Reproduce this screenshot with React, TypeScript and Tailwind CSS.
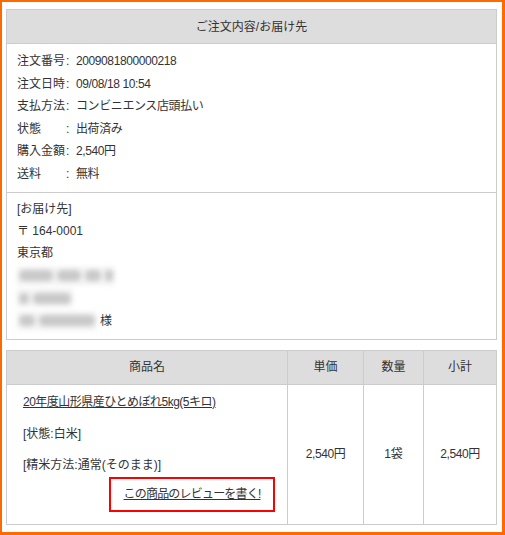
const font = "font-['Liberation_Sans','Noto_Sans_CJK_JP',sans-serif]";

const orderRows = [
  { label: "注文番号", value: "2009081800000218" },
  { label: "注文日時", value: "09/08/18 10:54" },
  { label: "支払方法", value: "コンビニエンス店頭払い" },
  { label: "状態", value: "出荷済み" },
  { label: "購入金額", value: "2,540円" },
  { label: "送料", value: "無料" },
];

const Blur = ({ parts }: { parts: number[] }) => (
  <div className="flex items-center h-[22.4px]">
    <div className="flex items-center gap-[4px] bg-[#f2f2f2] px-[2px] h-[18px] blur-[2.5px]">
      {parts.map((w, i) => (
        <span key={i} className="h-[11px] rounded-full bg-[#c9c9c9]" style={{ width: w }} />
      ))}
    </div>
  </div>
);

export default function App() {
  return (
    <div
      className={`${font} w-[505px] h-[535px] bg-white border-[#ff6a00] border-l-2 border-t-2 border-r-[3px] border-b-[3px] pl-[4px] pr-[5px] pt-[7px] text-[12px] text-[#333]`}
    >
      {/* order info */}
      <div className="border border-[#cccccc]">
        <div className="h-[34px] bg-[#dddddd] border-b border-[#cccccc] flex items-center justify-center">
          ご注文内容/お届け先
        </div>
        <div className="pl-[10px] pt-[6px] pb-[6px] border-b border-[#cccccc]">
          {orderRows.map((r) => (
            <div key={r.label} className="flex whitespace-nowrap leading-[22.6px]">
              <span className="w-[49px] shrink-0">{r.label}</span>
              <span className="w-[10px] shrink-0">:</span>
              <span className="tracking-[-0.4px]">{r.value}</span>
            </div>
          ))}
        </div>
        <div className="pl-[10px] pt-[5px] pb-[7px] leading-[22.4px]">
          <div>[お届け先]</div>
          <div>〒 164-0001</div>
          <div>東京都</div>
          <Blur parts={[34, 24, 16, 8]} />
          <Blur parts={[10, 38]} />
          <div className="flex items-center gap-[3px]">
            <Blur parts={[16, 56]} />
            <span>様</span>
          </div>
        </div>
      </div>

      {/* items */}
      <table className="mt-[10px] w-full border-collapse border border-[#cccccc]">
        <thead>
          <tr className="h-[34px] bg-[#dddddd]">
            <th className="w-[281px] border border-[#cccccc] font-normal">商品名</th>
            <th className="w-[76px] border border-[#cccccc] font-normal">単価</th>
            <th className="w-[60px] border border-[#cccccc] font-normal">数量</th>
            <th className="border border-[#cccccc] font-normal">小計</th>
          </tr>
        </thead>
        <tbody>
          <tr className="h-[140px]">
            <td className="border border-[#cccccc] align-top pl-[16px] pr-[12px] pt-[6px]">
              <div className="leading-[22px] tracking-[-0.5px]">
                <a href="#" className="underline">20年度山形県産ひとめぼれ5kg(5キロ)</a>
              </div>
              <div className="leading-[22px] mt-[10px]">[状態:白米]</div>
              <div className="leading-[22px] mt-[9px]">[精米方法:通常(そのまま)]</div>
              <div className="flex justify-end mt-[1px]">
                <div className="w-[166px] h-[35px] border-2 border-[#ff0000] flex items-center justify-center">
                  <a href="#" className="underline tracking-[-0.8px]">この商品のレビューを書く!</a>
                </div>
              </div>
            </td>
            <td className="border border-[#cccccc] text-center tracking-[-0.4px]">2,540円</td>
            <td className="border border-[#cccccc] text-center">1袋</td>
            <td className="border border-[#cccccc] text-center tracking-[-0.4px]">2,540円</td>
          </tr>
        </tbody>
      </table>
    </div>
  );
}
